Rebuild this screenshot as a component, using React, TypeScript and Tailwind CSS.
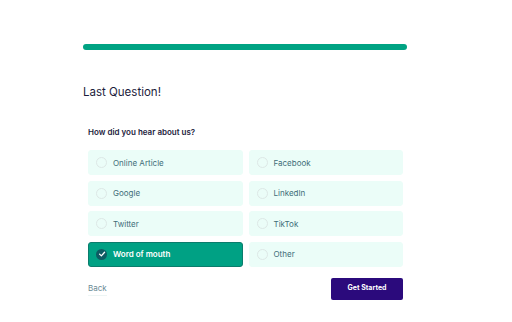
const options = [
  "Online Article",
  "Facebook",
  "Google",
  "LinkedIn",
  "Twitter",
  "TikTok",
  "Word of mouth",
  "Other",
];

const selected = "Word of mouth";

function Check() {
  return (
    <span className="flex h-[11px] w-[11px] items-center justify-center rounded-full bg-[#0e5b63]">
      <svg width="8" height="8" viewBox="0 0 10 10" fill="none">
        <path d="M2 5.2 4.2 7.4 8.2 2.8" stroke="white" strokeWidth="1.6" strokeLinecap="round" strokeLinejoin="round" />
      </svg>
    </span>
  );
}

export default function App() {
  return (
    <div
      className="h-[322px] w-[512px] bg-white"
      style={{ fontFamily: "Inter, 'Noto Sans', sans-serif" }}
    >
      <div className="flex flex-col pl-[83px] pt-[44px]">
        <div className="h-[6px] w-[324px] rounded-full bg-[#00a383]" />
        <h1 className="mt-[35px] text-[11.5px] leading-[14px] text-[#1c1c3c]">Last Question!</h1>
        <div className="flex w-[320px] flex-col pl-[5px]">
          <p className="mt-[28px] text-[8px] font-semibold leading-[10px] text-[#1c1c3c]">
            How did you hear about us?
          </p>
          <div className="mt-[13px] grid grid-cols-2 gap-x-[6px] gap-y-[5.5px]">
            {options.map((o) => {
              const on = o === selected;
              return (
                <div
                  key={o}
                  className={
                    on
                      ? "flex h-[25px] items-center gap-[6px] rounded-[3px] border border-[#0b7c6c] bg-[#00a184] pl-[7px] text-[8px] font-semibold text-white"
                      : "flex h-[25px] items-center gap-[6px] rounded-[3px] border border-[#ebfdf8] bg-[#ebfdf8] pl-[7px] text-[8px] text-[#3f6e78]"
                  }
                >
                  {on ? (
                    <Check />
                  ) : (
                    <span className="h-[11px] w-[11px] rounded-full border border-[#dde8e6]" />
                  )}
                  {o}
                </div>
              );
            })}
          </div>
          <div className="mt-[11px] flex items-center justify-between">
            <span className="border-b border-[#edf5f4] pb-[1px] text-[8px] text-[#6a8b95]">Back</span>
            <button className="h-[22px] w-[72px] rounded-[2px] bg-[#2b0a7c] text-[7px] font-bold text-white">
              Get Started
            </button>
          </div>
        </div>
      </div>
    </div>
  );
}
